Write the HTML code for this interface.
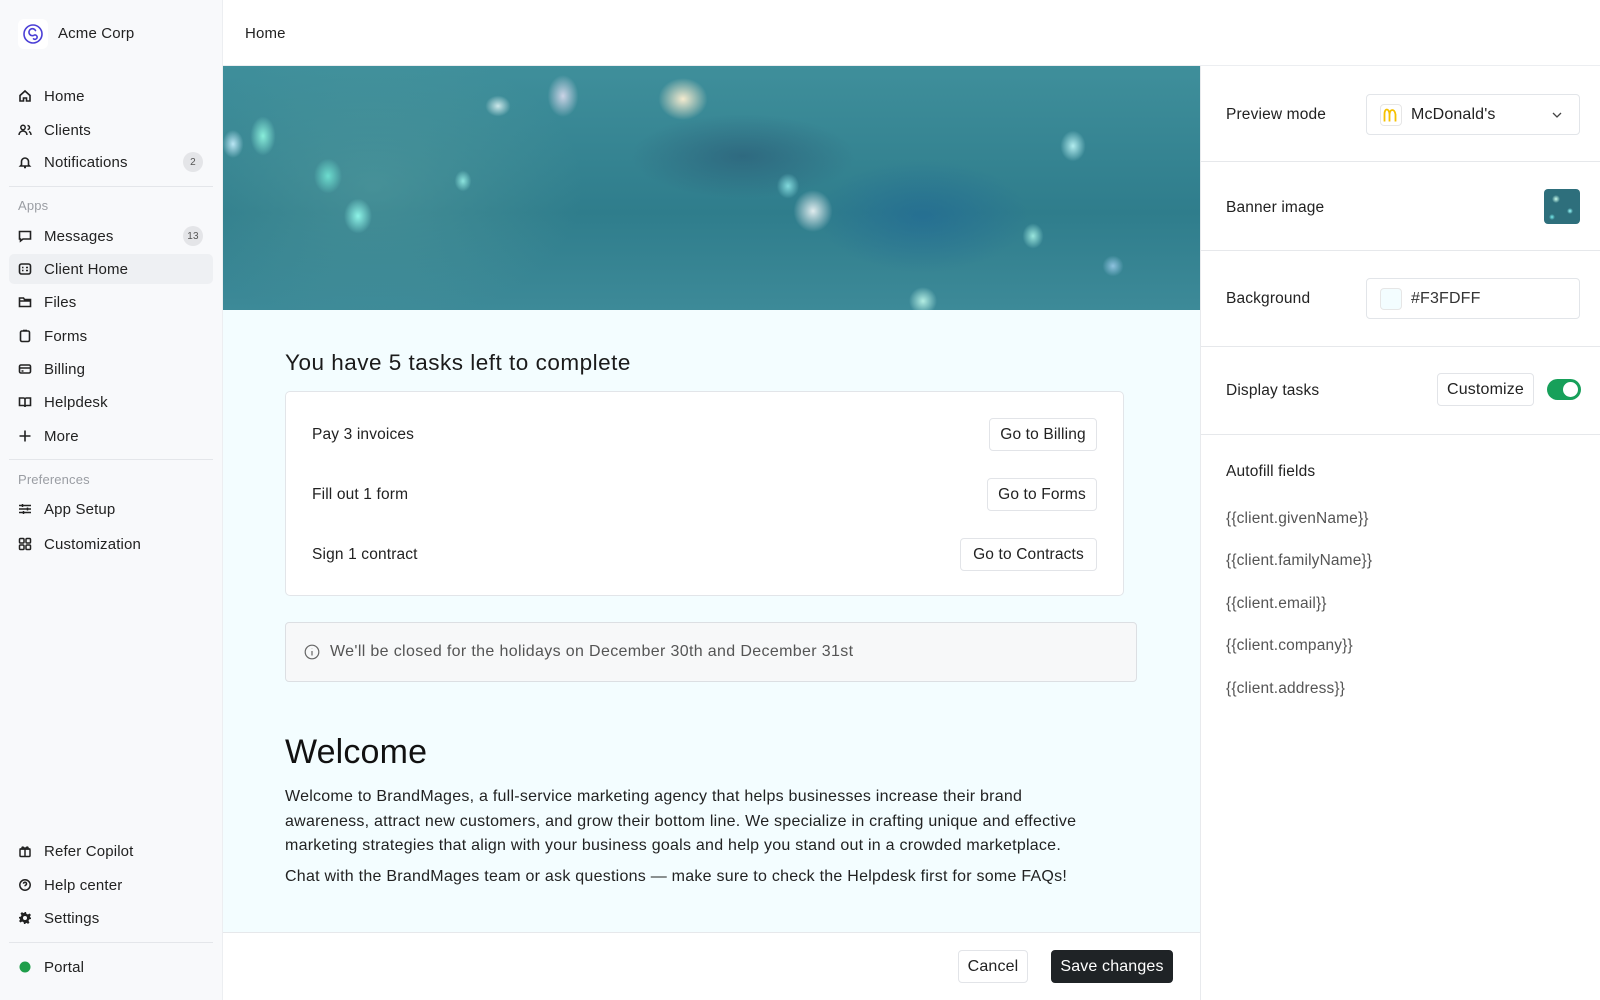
<!DOCTYPE html>
<html><head><meta charset="utf-8">
<style>
*{box-sizing:border-box;margin:0;padding:0}
body{width:1600px;height:1000px;overflow:hidden;font-family:"Liberation Sans",sans-serif;color:#222;background:#fff;position:relative;letter-spacing:.15px}
.sb{position:absolute;left:0;top:0;width:223px;height:1000px;background:#f8f9fb;border-right:1px solid #eceef1}
.abs{position:absolute}
.it{position:absolute;left:9px;width:204px;height:30px;display:flex;align-items:center;font-size:15px;color:#222}
.it svg{position:absolute;left:9px;width:14px;height:14px}
.it span{position:absolute;left:35px;top:7px}
.badge{position:absolute;right:10px;width:20px;height:20px;border-radius:50%;background:#e4e5e8;font-size:10px;color:#555;display:flex;align-items:center;justify-content:center}
.sec{position:absolute;left:18px;font-size:13px;color:#9a9da3}
.hr{position:absolute;left:9px;width:204px;height:1px;background:#e4e6ea}
.main{position:absolute;left:223px;top:66px;width:977px;height:866px;background:#f3fdff}
.btn{position:absolute;height:33px;border:1px solid #e2e4e8;border-radius:4px;background:#fff;font-size:15.5px;display:flex;align-items:center;justify-content:center;color:#222}
.rp{position:absolute;left:1200px;top:66px;width:400px;height:934px;border-left:1px solid #e8eaed;background:#fff}
.lbl{position:absolute;left:25px;font-size:15.5px;color:#222}
.rhr{position:absolute;left:0;width:400px;height:1px;background:#e6e8eb}
.fld{position:absolute;left:25px;font-size:15.5px;color:#555}
</style></head><body>
<div class="sb">
 <div class="abs" style="left:18px;top:19px;width:30px;height:30px;background:#fff;border-radius:6px"></div>
 <svg class="abs" style="left:22px;top:23px" width="22" height="22" viewBox="0 0 22 22"><circle cx="11" cy="11" r="9" fill="none" stroke="#4b3fd6" stroke-width="1.6"/><path d="M13.5 7.5a3.5 3.5 0 1 0-1 4.5 2.2 2.2 0 1 1-1 3.8" fill="none" stroke="#4b3fd6" stroke-width="1.6" stroke-linecap="round"/></svg>
 <div class="abs" style="left:58px;top:25px;font-size:15px">Acme Corp</div>

 <div class="it" style="top:81px"><svg viewBox="0 0 14 14" fill="none" stroke="#222" stroke-width="1.6"><path d="M2 6.5L7 2l5 4.5V12H8.5V9h-3v3H2z"/></svg><span>Home</span></div>
 <div class="it" style="top:115px"><svg viewBox="0 0 14 14" fill="none" stroke="#222" stroke-width="1.5"><circle cx="5" cy="4.5" r="2.2"/><path d="M1 12c0-2.5 2-4 4-4s4 1.5 4 4M9.5 2.5a2 2 0 0 1 0 4M11 8.5c1.2.6 2 1.8 2 3.5"/></svg><span>Clients</span></div>
 <div class="it" style="top:147px"><svg viewBox="0 0 14 14" fill="none" stroke="#222" stroke-width="1.6"><path d="M3.5 10V6.5a3.5 3.5 0 0 1 7 0V10l1 1h-9zM6 12.5h2"/></svg><span>Notifications</span><div class="badge">2</div></div>
 <div class="hr" style="top:186px"></div>
 <div class="sec" style="top:198px">Apps</div>
 <div class="it" style="top:221px"><svg viewBox="0 0 14 14" fill="none" stroke="#222" stroke-width="1.6"><path d="M1.5 2.5h11v7.5H5L2.5 12V10h-1z"/></svg><span>Messages</span><div class="badge">13</div></div>
 <div class="it" style="top:254px;background:#eef0f3;border-radius:5px"><svg viewBox="0 0 14 14" fill="none" stroke="#222" stroke-width="1.6"><rect x="1.5" y="2" width="11" height="10" rx="2"/><path d="M4 5.5h1.5M4 8.5h1.5M8 5.5h2M8 8.5h2"/></svg><span>Client Home</span></div>
 <div class="it" style="top:287px"><svg viewBox="0 0 14 14" fill="none" stroke="#222" stroke-width="1.6"><path d="M1.5 3h4l1 1.5h6v7h-11zM1.5 6h11"/></svg><span>Files</span></div>
 <div class="it" style="top:321px"><svg viewBox="0 0 14 14" fill="none" stroke="#222" stroke-width="1.6"><rect x="2.5" y="2" width="9" height="10.5" rx="1.5"/><path d="M5 1.5h4"/></svg><span>Forms</span></div>
 <div class="it" style="top:354px"><svg viewBox="0 0 14 14" fill="none" stroke="#222" stroke-width="1.6"><rect x="1.5" y="3" width="11" height="8" rx="1.5"/><path d="M1.5 6h11M3.5 9h2"/></svg><span>Billing</span></div>
 <div class="it" style="top:387px"><svg viewBox="0 0 14 14" fill="none" stroke="#222" stroke-width="1.6"><path d="M1.5 3h4a1.5 1.5 0 0 1 1.5 1.5V12a1.5 1.5 0 0 0-1.5-1.5h-4zM12.5 3h-4A1.5 1.5 0 0 0 7 4.5V12a1.5 1.5 0 0 1 1.5-1.5h4z"/></svg><span>Helpdesk</span></div>
 <div class="it" style="top:421px"><svg viewBox="0 0 14 14" fill="none" stroke="#222" stroke-width="1.6"><path d="M7 1.5v11M1.5 7h11"/></svg><span>More</span></div>
 <div class="hr" style="top:459px"></div>
 <div class="sec" style="top:472px">Preferences</div>
 <div class="it" style="top:494px"><svg viewBox="0 0 14 14" fill="none" stroke="#222" stroke-width="1.5"><path d="M1 3.5h12M1 7h12M1 10.5h12M4.5 2v3M9.5 5.5v3M5.5 9v3"/></svg><span>App Setup</span></div>
 <div class="it" style="top:529px"><svg viewBox="0 0 14 14" fill="none" stroke="#222" stroke-width="1.5"><rect x="1.5" y="1.5" width="4.5" height="4.5" rx="1"/><rect x="8" y="1.5" width="4.5" height="4.5" rx="1"/><rect x="1.5" y="8" width="4.5" height="4.5" rx="1"/><rect x="8" y="8" width="4.5" height="4.5" rx="1"/></svg><span>Customization</span></div>

 <div class="it" style="top:836px"><svg viewBox="0 0 14 14" fill="none" stroke="#222" stroke-width="1.5"><rect x="2" y="5" width="10" height="7.5" rx="1"/><path d="M1.5 5h11M7 5v7.5M7 5C5 2 3 3 4.5 5M7 5c2-3 4-2 2.5 0"/></svg><span>Refer Copilot</span></div>
 <div class="it" style="top:870px"><svg viewBox="0 0 14 14" fill="none" stroke="#222" stroke-width="1.5"><circle cx="7" cy="7" r="5.2"/><path d="M5.5 5.8a1.5 1.5 0 1 1 2 1.4c-.5.2-.5.6-.5 1M7 10v.1"/></svg><span>Help center</span></div>
 <div class="it" style="top:903px"><svg viewBox="0 0 14 14"><path fill="#222" d="M6 1h2l.4 1.8 1.5.7 1.6-1 1.4 1.4-1 1.6.7 1.5L13 6v2l-1.8.4-.7 1.5 1 1.6-1.4 1.4-1.6-1-1.5.7L8 13H6l-.4-1.8-1.5-.7-1.6 1-1.4-1.4 1-1.6-.7-1.5L1 8V6l1.8-.4.7-1.5-1-1.6 1.4-1.4 1.6 1 1.5-.7z"/><circle cx="7" cy="7" r="2" fill="#f8f9fb"/></svg><span>Settings</span></div>
 <div class="hr" style="top:942px"></div>
 <div class="it" style="top:952px"><svg viewBox="0 0 14 14"><circle cx="7" cy="7" r="5.5" fill="#1e9e4a"/></svg><span>Portal</span></div>
</div>

<div class="abs" style="left:223px;top:0;width:1377px;height:66px;border-bottom:1px solid #eceef1;background:#fff"></div>
<div class="abs" style="left:245px;top:25px;font-size:15px">Home</div>

<div class="main">
 <div class="abs" style="left:0;top:0;width:977px;height:244px;background:
 radial-gradient(ellipse 35px 30px at 460px 33px,rgba(255,240,210,.95),transparent 70%),
 radial-gradient(ellipse 22px 30px at 340px 30px,rgba(240,230,250,.8),transparent 70%),
 radial-gradient(ellipse 18px 15px at 275px 40px,rgba(240,255,255,.8),transparent 70%),
 radial-gradient(ellipse 28px 30px at 590px 145px,rgba(255,255,255,.85),transparent 70%),
 radial-gradient(ellipse 16px 18px at 565px 120px,rgba(150,240,240,.8),transparent 70%),
 radial-gradient(ellipse 20px 25px at 135px 150px,rgba(150,255,240,.9),transparent 70%),
 radial-gradient(ellipse 18px 28px at 40px 70px,rgba(150,255,230,.85),transparent 70%),
 radial-gradient(ellipse 15px 20px at 10px 78px,rgba(200,240,255,.9),transparent 70%),
 radial-gradient(ellipse 20px 25px at 105px 110px,rgba(120,240,220,.8),transparent 70%),
 radial-gradient(ellipse 18px 22px at 850px 80px,rgba(200,255,255,.85),transparent 70%),
 radial-gradient(ellipse 15px 18px at 810px 170px,rgba(180,255,240,.8),transparent 70%),
 radial-gradient(ellipse 15px 15px at 890px 200px,rgba(180,220,255,.7),transparent 70%),
 radial-gradient(ellipse 20px 20px at 700px 235px,rgba(200,255,240,.85),transparent 70%),
 radial-gradient(ellipse 12px 15px at 240px 115px,rgba(160,250,240,.8),transparent 70%),
 radial-gradient(ellipse 160px 60px at 520px 90px,rgba(40,80,110,.5),transparent 70%),
 radial-gradient(ellipse 150px 80px at 700px 150px,rgba(30,100,150,.55),transparent 70%),
 radial-gradient(ellipse 300px 200px at 150px 120px,rgba(90,160,160,.5),transparent 70%),
 linear-gradient(180deg,#3f8f9b,#2f7d8c 60%,#3d8a98)"></div>

 <div class="abs" style="left:62px;top:284px;font-size:22.5px;color:#1b1b1b;letter-spacing:.5px">You have 5 tasks left to complete</div>
 <div class="abs" style="left:62px;top:325px;width:839px;height:205px;background:#fff;border:1px solid #e2e5e9;border-radius:5px">
  <div class="abs" style="left:26px;top:34px;font-size:15.5px">Pay 3 invoices</div>
  <div class="abs" style="left:26px;top:94px;font-size:15.5px">Fill out 1 form</div>
  <div class="abs" style="left:26px;top:154px;font-size:15.5px">Sign 1 contract</div>
  <div class="btn" style="right:26px;top:26px;width:108px">Go to Billing</div>
  <div class="btn" style="right:26px;top:86px;width:110px">Go to Forms</div>
  <div class="btn" style="right:26px;top:146px;width:137px">Go to Contracts</div>
 </div>
 <div class="abs" style="left:62px;top:556px;width:852px;height:60px;background:#f7f8f9;border:1px solid #dcdfe3;border-radius:4px">
  <svg class="abs" style="left:18px;top:21px" width="16" height="16" viewBox="0 0 16 16" fill="none" stroke="#666" stroke-width="1.2"><circle cx="8" cy="8" r="6.8"/><path d="M8 7v4.5M8 4.5v.2"/></svg>
  <div class="abs" style="left:44px;top:20px;font-size:16px;color:#555;letter-spacing:.35px">We'll be closed for the holidays on December 30th and December 31st</div>
 </div>
 <div class="abs" style="left:62px;top:667px;font-size:34px;color:#111">Welcome</div>
 <div class="abs" style="left:62px;top:719px;width:805px;font-size:16px;line-height:24.7px;color:#222;letter-spacing:.25px">Welcome to BrandMages, a full-service marketing agency that helps businesses increase their brand awareness, attract new customers, and grow their bottom line. We specialize in crafting unique and effective marketing strategies that align with your business goals and help you stand out in a crowded marketplace.</div>
 <div class="abs" style="left:62px;top:802px;font-size:16px;color:#222;letter-spacing:.25px">Chat with the BrandMages team or ask questions — make sure to check the Helpdesk first for some FAQs!</div>
</div>
<div class="abs" style="left:223px;top:932px;width:977px;height:68px;background:#fff;border-top:1px solid #e6e8eb"></div>
<div class="btn" style="left:958px;top:950px;width:70px;height:33px;font-size:16px">Cancel</div>
<div class="btn" style="left:1051px;top:950px;width:122px;height:33px;font-size:16px;background:#1f2326;border-color:#1f2326;color:#fff">Save changes</div>

<div class="rp">
 <div class="lbl" style="top:40px">Preview mode</div>
 <div class="abs" style="left:165px;top:28px;width:214px;height:41px;border:1px solid #e2e5e9;border-radius:4px">
  <div class="abs" style="left:13px;top:9px;width:22px;height:22px;border:1px solid #e6e6e6;border-radius:4px;background:#fff"></div>
  <svg class="abs" style="left:16px;top:13px" width="16" height="14" viewBox="0 0 16 14" fill="none" stroke="#f6c100" stroke-width="1.8"><path d="M1.5 13.5V6c0-6 4.5-6 5 0v7.5M6.5 6.5c.5-6 5-6 6 0v7"/></svg>
  <div class="abs" style="left:44px;top:11px;font-size:16px">McDonald's</div>
  <svg class="abs" style="left:184px;top:15px" width="12" height="10" viewBox="0 0 12 10" fill="none" stroke="#444" stroke-width="1.3"><path d="M2 3l4 4 4-4"/></svg>
 </div>
 <div class="rhr" style="top:95px"></div>
 <div class="lbl" style="top:133px">Banner image</div>
 <div class="abs" style="left:343px;top:123px;width:36px;height:35px;border-radius:4px;background:radial-gradient(circle at 12px 10px,#cfe 0,transparent 4px),radial-gradient(circle at 26px 22px,#9ff 0,transparent 3px),radial-gradient(circle at 8px 28px,#7ee 0,transparent 3px),#2e6f7c"></div>
 <div class="rhr" style="top:184px"></div>
 <div class="lbl" style="top:224px">Background</div>
 <div class="abs" style="left:165px;top:212px;width:214px;height:41px;border:1px solid #e2e5e9;border-radius:4px">
  <div class="abs" style="left:13px;top:9px;width:22px;height:22px;border:1px solid #e6e6e6;border-radius:4px;background:#f3fdff"></div>
  <div class="abs" style="left:44px;top:11px;font-size:16px;color:#333">#F3FDFF</div>
 </div>
 <div class="rhr" style="top:280px"></div>
 <div class="lbl" style="top:316px">Display tasks</div>
 <div class="btn" style="left:236px;top:307px;width:97px;height:33px;font-size:16px">Customize</div>
 <div class="abs" style="left:346px;top:313px;width:34px;height:21px;border-radius:11px;background:#17a05a"><div class="abs" style="left:16px;top:3px;width:15px;height:15px;border-radius:50%;background:#fff"></div></div>
 <div class="rhr" style="top:368px"></div>
 <div class="lbl" style="top:397px">Autofill fields</div>
 <div class="fld" style="top:444px">{{client.givenName}}</div>
 <div class="fld" style="top:486px">{{client.familyName}}</div>
 <div class="fld" style="top:529px">{{client.email}}</div>
 <div class="fld" style="top:571px">{{client.company}}</div>
 <div class="fld" style="top:614px">{{client.address}}</div>
</div>
</body></html>
